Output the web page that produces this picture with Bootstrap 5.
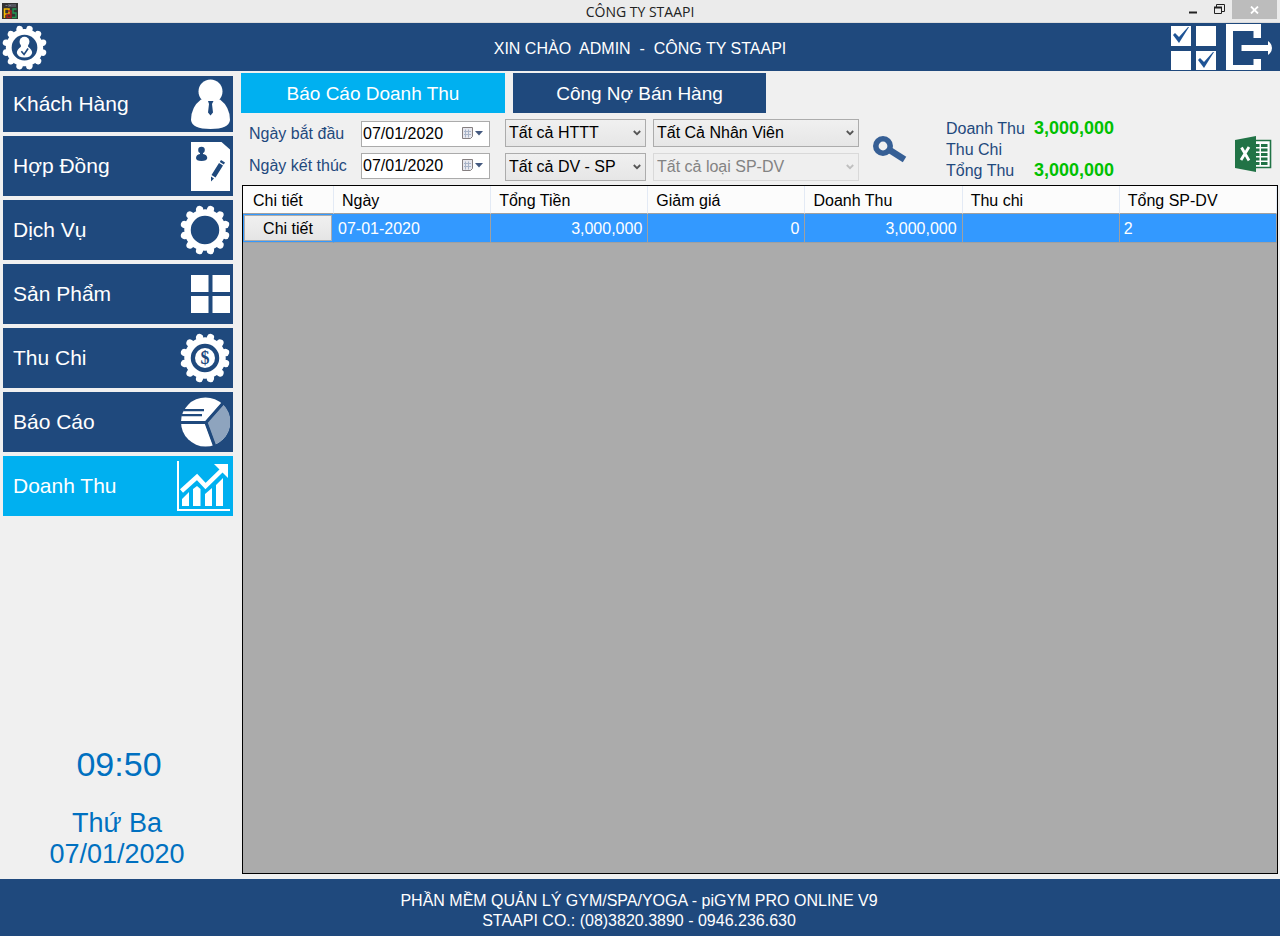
<!DOCTYPE html>
<html lang="vi">
<head>
<meta charset="utf-8">
<meta name="viewport" content="width=device-width, initial-scale=1">
<title>CÔNG TY STAAPI</title>
<link href="https://cdn.jsdelivr.net/npm/bootstrap@5.3.0/dist/css/bootstrap.min.css" rel="stylesheet">
<style>
:root { --navy: #1f497d; --sky: #00b0f0; --face: #f0f0f0; }
body { font-family: "Liberation Sans", Arial, sans-serif; font-size: 16px; line-height: 20px; background: var(--face); color: #000; }
svg { display: block; flex: none; }
button { font-family: inherit; }
.plain { border: 0; padding: 0; background: none; color: inherit; }
.side { flex: 1 1 0; }
.titlebar { height: 23px; background: #ebebeb; border-bottom: 1px solid #dcdcdc; font: 14px/24px "Open Sans", sans-serif; color: #222; }
.app-icon { margin: 3px 0 0 2px; }
.win-btn { width: 26px; height: 19px; display: flex; align-items: center; justify-content: center; }
.win-close { width: 45px; background: #bcbcbc; margin-right: 3px; }
.banner { height: 48px; background: var(--navy); color: #fff; white-space: pre; }
.banner-tools { margin-right: 4px; }
.sidebar { width: 236px; flex: none; padding: 5px 3px 9px; }
.menu-btn { height: 60px; border: 0; padding: 0 3px 0 10px; background: var(--navy); color: #fff; font-size: 21px; line-height: 24px; }
.menu-btn:first-child { height: 56px; }
.menu-btn.active, .tab-btn.active { background: var(--sky); }
.clock { color: #0070c0; font-size: 27px; line-height: 31px; text-align: center; padding-right: 2px; }
.clock time.hour { font-size: 34px; line-height: 40px; margin-bottom: 24px; padding-left: 4px; }
.content { padding: 2px 2px 5px 5px; min-width: 0; }
.tab-btn { width: 253px; height: 40px; border: 0; background: var(--navy); color: #fff; font-size: 19px; line-height: 24px; padding-top: 2px; }
.tab-btn.active { width: 264px; }
.filters { padding: 5px 6px 4px 8px; }
.dates { display: grid; grid-template-columns: 112px 129px; row-gap: 6px; align-items: center; color: var(--navy); }
.datebox { height: 26px; border: 1px solid #ababab; background: #fff; padding-right: 6px; }
.datebox input { border: 0; padding: 0 0 0 1px; min-width: 0; width: 100%; background: none; outline: 0; color: #000; }
.combos { display: grid; grid-template-columns: 141px 206px; gap: 6px 7px; margin-left: 15px; }
.combos .form-select { height: 28px; padding: 0 16px 0 3px; font-size: 16px; line-height: 20px; color: #000; border: 1px solid #acacac; border-radius: 0;
  background: url("data:image/svg+xml,%3Csvg xmlns='http://www.w3.org/2000/svg' width='8' height='6'%3E%3Cpath d='M0.8 1L4 4.2 7.2 1' fill='none' stroke='%23555' stroke-width='1.8'/%3E%3C/svg%3E") right 4px center / 8px 6px no-repeat, linear-gradient(#f0f0f0, #e6e6e6); }
.combos .form-select:disabled { color: #838383; border-color: #d9d9d9;
  background: url("data:image/svg+xml,%3Csvg xmlns='http://www.w3.org/2000/svg' width='8' height='6'%3E%3Cpath d='M0.8 1L4 4.2 7.2 1' fill='none' stroke='%23bfbfbf' stroke-width='1.8'/%3E%3C/svg%3E") right 4px center / 8px 6px no-repeat, #efefef; }
.search { margin-left: 14px; }
.totals { display: grid; grid-template-columns: 88px auto; grid-auto-rows: 21px; line-height: 21px; margin: 0 0 0 39px; color: var(--navy); }
.totals dt { font-weight: 400; }
.totals dd { margin: 0; font-size: 18px; font-weight: 700; color: #00c000; }
.gridview { border: 1px solid #000; background: #ababab; margin-left: 1px; }
.gridview table { width: 100%; table-layout: fixed; border-collapse: separate; border-spacing: 0; }
.gridview th { height: 28px; padding: 2px 8px 0; background: #fcfcfc; font-weight: 400; border-right: 1px solid #e3eaf5; border-bottom: 1px solid #a0a0a0; }
.gridview th:first-child { width: 91px; padding-left: 10px; }
.gridview td { height: 28px; padding: 2px 5px 0 4px; background: #39f; color: #fff; border-right: 1px solid #a0a0a0; border-bottom: 1px solid #a0a0a0; }
.gridview td:first-child { padding: 1px; border-right-color: #39f; }
.detail { display: block; width: 100%; height: 26px; padding: 1px 0 0; border: 1px solid #acacac; background: linear-gradient(#f0f0f0, #e5e5e5); }
.bottom { background: var(--navy); color: #fff; padding: 12px 2px 5px 0; }
</style>
</head>
<body class="d-flex flex-column min-vh-100">

<svg width="0" height="0" class="position-absolute" aria-hidden="true">
  <defs>
    <g id="gear" fill="none" stroke="#fff">
      <circle cx="25" cy="25" r="17.500" stroke-width="6.500"/>
      <circle cx="25" cy="25" r="21.300" stroke-width="7.200" stroke-linecap="round" pathLength="12" stroke-dasharray="0 1" transform="rotate(15 25 25)"/>
    </g>
  </defs>
</svg>

<div class="titlebar d-flex">
  <div class="side">
    <svg class="app-icon" width="16" height="16" viewBox="0 0 16 16"><rect width="16" height="16" fill="#333"/><path d="M3.500 2.500h2M7 1v3M9 1v3M7 2.500h2M11 1v3M13 1v3" stroke="#778" fill="none"/><path d="M2.500 15V6h4.500v5H3" fill="none" stroke="#f5b800" stroke-width="1.500"/><path d="M6 8h3v6.500H5v-3h4" fill="none" stroke="#b02020" stroke-width="1.300"/><path d="M14.500 6h-3.500v4h3v4.500h-4" fill="none" stroke="#239a55" stroke-width="1.300"/></svg>
  </div>
  <div>CÔNG TY STAAPI</div>
  <div class="side d-flex justify-content-end">
    <button class="plain win-btn" aria-label="Thu nhỏ"><svg width="8" height="8"><path d="M0 6.500h8" stroke="#222" stroke-width="2"/></svg></button>
    <button class="plain win-btn" aria-label="Khôi phục"><svg width="11" height="11" viewBox="0 0 11 11"><path d="M2.500 3V.5h8v7H8" fill="none" stroke="#222"/><path d="M.5 3.500h7v6h-7z" fill="none" stroke="#222"/><path d="M0 3.500h8" stroke="#222" stroke-width="2"/></svg></button>
    <button class="plain win-btn win-close" aria-label="Đóng"><svg width="9" height="8" viewBox="0 0 9 8"><path d="M1 .5l7 7M8 .5l-7 7" stroke="#fff" stroke-width="1.800"/></svg></button>
  </div>
</div>

<header class="banner d-flex align-items-center">
  <div class="side"><button class="plain d-block" aria-label="Tài khoản"><svg width="48" height="48" viewBox="-2.200 -2.400 53.300 53.300"><use href="#gear"/><circle cx="25" cy="18.500" r="5.500" fill="#fff"/><path d="M21 21h8v3q4.500 3 4.500 7-1.500 5-8.500 5t-8.500-5q0-4 4.500-7z" fill="#fff"/><path d="M21.500 29l3 3.500 4.500-6.500" fill="none" stroke="#1f497d" stroke-width="1.800"/></svg></button></div>
  <div class="pt-1">XIN CHÀO  ADMIN  -  CÔNG TY STAAPI</div>
  <div class="side d-flex justify-content-end">
    <button class="plain me-2" aria-label="Danh mục"><svg width="47" height="46" viewBox="0 0 47 46"><path fill="#fff" d="M0 2h20v20H0zM25 2h20v20H25zM0 27h20v19H0zM25 27h20v19H25z"/><path fill="#1f5496" d="M2 11l2-2 4 4L17 3h1L8 19zM27 36l2-2 4 4L42 28h1L33 44z"/></svg></button>
    <button class="plain banner-tools" aria-label="Đăng xuất"><svg width="50" height="46" viewBox="0 0 50 46"><path fill="#fff" d="M0 0h35v14h-7.500V7H7v34h20.500v-6H35v11H0z"/><path fill="#fff" d="M15.500 21H42v-4q4 3 4 7t-4 7v-4H15.500z"/></svg></button>
  </div>
</header>

<div class="d-flex flex-grow-1">
  <aside class="sidebar d-flex flex-column">
    <nav class="d-flex flex-column gap-1" aria-label="Chức năng">
      <button class="menu-btn d-flex align-items-center justify-content-between"><span>Khách Hàng</span>
        <svg width="39" height="50" viewBox="0 0 39 50"><circle cx="19.500" cy="12.500" r="12" fill="#fff"/><path fill="#fff" d="M10 20.500h19Q39 28 39 41q-1 9-19.500 9T0 41Q0 28 10 20.500z"/><path fill="#1f497d" d="M17 22h5.500l-1.500 3 1 8.500-2.500 3-2.500-3 1-8.500z"/></svg></button>
      <button class="menu-btn d-flex align-items-center justify-content-between"><span>Hợp Đồng</span>
        <svg width="39" height="49" viewBox="0 0 39 49"><path fill="#fff" d="M0 0h30.500L39 7.500V49H0z"/><g fill="#1f497d"><circle cx="10.500" cy="8" r="3.300"/><path d="M9 10h3v2q4 .5 4.300 4-.3 3-5.800 3T5 16q.2-3.500 4-4z"/><path d="M30 18l4 2.500-1.200 2-4-2.500zM28 21l4 2.500-7.500 12-4-2.500zM20 34.500l3 2-3 3z"/></g></svg></button>
      <button class="menu-btn d-flex align-items-center justify-content-between"><span>Dịch Vụ</span>
        <svg width="50" height="50" viewBox="0 0 50 50"><use href="#gear"/></svg></button>
      <button class="menu-btn d-flex align-items-center justify-content-between"><span>Sản Phẩm</span>
        <svg width="39" height="38" viewBox="0 0 39 38"><path fill="#fff" d="M0 0h17.500v17H0zM21.500 0H39v17H21.500zM0 21h17.500v17H0zM21.500 21H39v17H21.500z"/></svg></button>
      <button class="menu-btn d-flex align-items-center justify-content-between"><span>Thu Chi</span>
        <svg width="50" height="50" viewBox="0 0 50 50"><use href="#gear"/><circle cx="25" cy="25" r="10" fill="#fff"/><text x="25" y="31" text-anchor="middle" font-family="Liberation Serif" font-weight="700" font-size="18" fill="#1f497d">$</text></svg></button>
      <button class="menu-btn d-flex align-items-center justify-content-between"><span>Báo Cáo</span>
        <svg width="49" height="50" viewBox="0 0 49 50"><circle cx="24.500" cy="25" r="24.500" fill="#fff"/><path fill="#8ea4be" d="M25 25.500L41.800 7.200A24.500 24.500 0 0 1 33.700 47.700z"/><path d="M0 25.500h25L42.500 6M25 25.500L34 50M3 13.200h20M1 18.200h20" fill="none" stroke="#1f497d" stroke-width="2.200"/><path d="M0 25.500h25L43 5M25 25.500L34 50" fill="none" stroke="#1f497d" stroke-width="3.200"/></svg></button>
      <button class="menu-btn active d-flex align-items-center justify-content-between"><span>Doanh Thu</span>
        <svg width="53" height="50" viewBox="0 0 53 50"><path d="M1 0v49h52" fill="none" stroke="#fff" stroke-width="2"/><path fill="#fff" d="M5 38l7-7v14H5zM16 28l4-3 3.500 3v17H16zM28 33l7-6v18h-7zM39 24l7-7v28h-7z"/><path d="M4.500 30L20 16l8.500 9L45 9" fill="none" stroke="#fff" stroke-width="4.500"/><path fill="#fff" d="M37 3h14v14z"/></svg></button>
    </nav>
    <div class="clock mt-auto d-flex flex-column">
      <time class="hour">09:50</time>
      <span>Thứ Ba</span>
      <time datetime="2020-01-07">07/01/2020</time>
    </div>
  </aside>

  <main class="content flex-grow-1 d-flex flex-column">
    <div class="d-flex gap-2">
      <button class="tab-btn active">Báo Cáo Doanh Thu</button>
      <button class="tab-btn">Công Nợ Bán Hàng</button>
    </div>

    <form class="filters d-flex align-items-center">
      <div class="dates">
        <label for="from">Ngày bắt đầu</label>
        <div class="datebox d-flex align-items-center">
          <input id="from" type="text" value="07/01/2020">
          <button type="button" class="plain" aria-label="Chọn ngày bắt đầu"><svg width="21" height="13" viewBox="0 0 21 13"><path fill="#e8e8ee" stroke="#857f80" d="M.5.5h10v9l-2 2h-8z"/><path d="M2 4.500h7M2 7.500h7M3.500 2.500v8M6.500 2.500v8" stroke="#a9b4c8" fill="none"/><path fill="#44597f" d="M13 4h8l-4 4.500z"/></svg></button>
        </div>
        <label for="to">Ngày kết thúc</label>
        <div class="datebox d-flex align-items-center">
          <input id="to" type="text" value="07/01/2020">
          <button type="button" class="plain" aria-label="Chọn ngày kết thúc"><svg width="21" height="13" viewBox="0 0 21 13"><path fill="#e8e8ee" stroke="#857f80" d="M.5.5h10v9l-2 2h-8z"/><path d="M2 4.500h7M2 7.500h7M3.500 2.500v8M6.500 2.500v8" stroke="#a9b4c8" fill="none"/><path fill="#44597f" d="M13 4h8l-4 4.500z"/></svg></button>
        </div>
      </div>
      <div class="combos">
        <select class="form-select" aria-label="Hình thức thanh toán"><option>Tất cả HTTT</option></select>
        <select class="form-select" aria-label="Nhân viên"><option>Tất Cả Nhân Viên</option></select>
        <select class="form-select" aria-label="Dịch vụ - Sản phẩm"><option>Tất cả DV - SP</option></select>
        <select class="form-select" aria-label="Loại SP-DV" disabled><option>Tất cả loại SP-DV</option></select>
      </div>
      <button type="button" class="plain search" aria-label="Tìm kiếm"><svg width="34" height="27" viewBox="0 0 34 27"><circle cx="10" cy="10" r="7.200" fill="none" stroke="#365f95" stroke-width="5.600"/><path d="M15 13L31.500 23.500" stroke="#365f95" stroke-width="6.500"/></svg></button>
      <dl class="totals">
        <dt>Doanh Thu</dt><dd>3,000,000</dd>
        <dt>Thu Chi</dt><dd></dd>
        <dt>Tổng Thu</dt><dd>3,000,000</dd>
      </dl>
      <button type="button" class="plain ms-auto pt-2" aria-label="Xuất Excel"><svg width="37" height="36" viewBox="0 0 37 36"><path fill="#fff" stroke="#217346" stroke-width="1.600" d="M18 4.500h17.500v27H18z"/><path fill="#217346" d="M0 4L21 0v36L0 32z"/><path d="M21 9.500h3.500M26 9.500h6.500M21 14h3.500M26 14h6.500M21 18.500h3.500M26 18.500h6.500M21 23h3.500M26 23h6.500M21 27.500h3.500M26 27.500h6.500" stroke="#217346" stroke-width="2.800"/><path d="M6.500 11.500l7.500 13M14 11l-8 13" stroke="#fff" stroke-width="2.800"/></svg></button>
    </form>

    <div class="gridview flex-grow-1">
      <table>
        <thead><tr><th>Chi tiết</th><th>Ngày</th><th>Tổng Tiền</th><th>Giảm giá</th><th>Doanh Thu</th><th>Thu chi</th><th>Tổng SP-DV</th></tr></thead>
        <tbody><tr><td><button class="detail">Chi tiết</button></td><td>07-01-2020</td><td class="text-end">3,000,000</td><td class="text-end">0</td><td class="text-end">3,000,000</td><td></td><td>2</td></tr></tbody>
      </table>
    </div>
  </main>
</div>

<footer class="bottom text-center">
  <div>PHẦN MỀM QUẢN LÝ GYM/SPA/YOGA - piGYM PRO ONLINE V9</div>
  <div>STAAPI CO.: (08)3820.3890 - 0946.236.630</div>
</footer>

<script src="https://cdn.jsdelivr.net/npm/bootstrap@5.3.0/dist/js/bootstrap.bundle.min.js"></script>
</body>
</html>
